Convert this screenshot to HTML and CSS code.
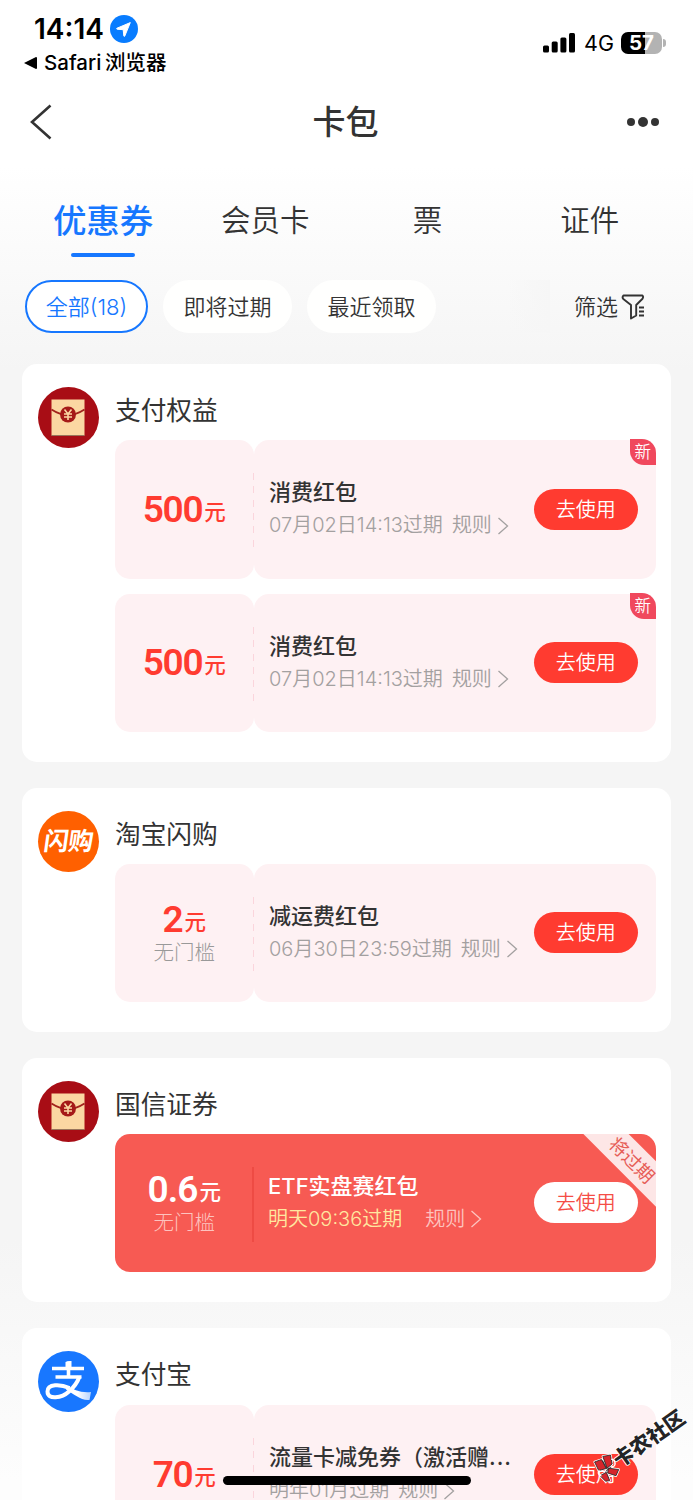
FILE: index.html
```html
<!DOCTYPE html>
<html lang="zh-CN">
<head>
<meta charset="utf-8">
<title>卡包</title>
<link rel="stylesheet" href="styles.css">
</head>
<body>
<svg class="defs" width="0" height="0">
  <defs>
    <linearGradient id="tail" x1="0" y1="0" x2="1" y2="0"><stop offset=".45" stop-color="#fff"/><stop offset="1" stop-color="#b5d3ff"/></linearGradient>
    <symbol id="envelope" viewBox="0 0 61 61">
      <circle cx="30.5" cy="30.5" r="30.5" fill="#a80d15"/>
      <rect x="13.5" y="12.5" width="33" height="36" fill="#fbd7a2"/>
      <path d="M13.5 48.5h33" stroke="#98745a" stroke-width="1"/>
      <path d="M13.5 22.5Q22 28 30 28T46.500 22.500" fill="none" stroke="#a2231c" stroke-width="1.800"/>
      <circle cx="30" cy="27.500" r="8" fill="#a51a18"/>
      <path d="M26.500 22.500l3.500 4.500 3.500-4.500M26 27h8M26 30h8M30 27v6" fill="none" stroke="#fbd7a2" stroke-width="1.600"/>
    </symbol>
    <symbol id="chev" viewBox="0 0 12 18"><path d="M1.500 1L10.500 9 1.500 17" fill="none" stroke="currentColor" stroke-width="1.300"/></symbol>
  </defs>
</svg>
<div class="page">
  <header class="status">
    <div class="status-left">
      <div class="clock"><span class="time">14:14</span>
        <svg class="loc" viewBox="0 0 28 28"><circle cx="14" cy="14" r="14" fill="#087cff"/><path d="M20.300 7.600L7 13.200q-1 .6.1 1l6.100.500.600 6.200q.400 1.100 1 .100Z" fill="#fff" stroke="#fff" stroke-width="1" stroke-linejoin="round"/></svg>
      </div>
      <div class="return"><svg class="tri" viewBox="0 0 13 12"><path d="M0 6L12 0q1 0 1 1v10q0 1-1 1z"/></svg><span class="safari">Safari</span><span>浏览器</span></div>
    </div>
    <div class="status-right">
      <svg class="signal" viewBox="0 0 32 20"><rect y="12.500" width="6" height="7" rx="1.500"/><rect x="8.700" y="8.500" width="6" height="11" rx="1.500"/><rect x="17.400" y="4.500" width="6" height="15" rx="1.500"/><rect x="26" y="0" width="6" height="19.500" rx="1.500"/></svg>
      <span class="net">4G</span>
      <span class="battery">57</span><i class="nub"></i>
    </div>
  </header>
  <nav class="navbar">
    <svg class="back" viewBox="0 0 22 36"><path d="M20.500 1.500L2 18 20.500 34.500" fill="none" stroke="#333" stroke-width="2.600"/></svg>
    <h1>卡包</h1>
    <svg class="more" viewBox="0 0 32 10"><circle cx="4" cy="5" r="4"/><circle cx="16" cy="5" r="5"/><circle cx="28" cy="5" r="4"/></svg>
  </nav>
  <div class="tabs"><span class="tab active">优惠券</span><span class="tab">会员卡</span><span class="tab">票</span><span class="tab">证件</span></div>
  <div class="filters">
    <span class="chip on">全部(18)</span><span class="chip">即将过期</span><span class="chip">最近领取</span>
    <i class="fade"></i>
    <span class="sift">筛选<svg viewBox="0 0 24 26"><path d="M2.500 1.500h19q1.200 1.500 0 3.300L15.200 11v10.500L10 24.500V11L2.300 5Q.800 3 2.500 1.500ZM18 13.500h5M18 17.500h5M18 21.500h5" fill="none" stroke="#333" stroke-width="1.900" stroke-linejoin="round"/></svg></span>
  </div>

  <section class="card">
    <svg class="logo"><use href="#envelope"/></svg>
    <div class="content">
      <h2>支付权益</h2>
      <div class="coupon">
        <div class="amount"><div class="price"><b>500</b>元</div></div>
        <div class="detail"><div class="info"><div class="name">消费红包</div><div class="meta">07月02日14:13过期<span class="rule">规则</span><svg class="chev"><use href="#chev"/></svg></div></div><span class="use">去使用</span></div>
        <span class="new">新</span>
      </div>
      <div class="coupon">
        <div class="amount"><div class="price"><b>500</b>元</div></div>
        <div class="detail"><div class="info"><div class="name">消费红包</div><div class="meta">07月02日14:13过期<span class="rule">规则</span><svg class="chev"><use href="#chev"/></svg></div></div><span class="use">去使用</span></div>
        <span class="new">新</span>
      </div>
    </div>
  </section>

  <section class="card">
    <div class="logo flash"><span>闪购</span></div>
    <div class="content">
      <h2>淘宝闪购</h2>
      <div class="coupon">
        <div class="amount"><div class="price"><b>2</b>元</div><div class="limit">无门槛</div></div>
        <div class="detail"><div class="info"><div class="name">减运费红包</div><div class="meta">06月30日23:59过期<span class="rule">规则</span><svg class="chev"><use href="#chev"/></svg></div></div><span class="use">去使用</span></div>
      </div>
    </div>
  </section>

  <section class="card">
    <svg class="logo"><use href="#envelope"/></svg>
    <div class="content">
      <h2>国信证券</h2>
      <div class="coupon urgent">
        <div class="amount"><div class="price"><b class="decimal">0.6</b>元</div><div class="limit">无门槛</div></div>
        <div class="detail"><div class="info"><div class="name">ETF实盘赛红包</div><div class="meta"><span class="due">明天09:36过期</span><span class="rule">规则</span><svg class="chev"><use href="#chev"/></svg></div></div><span class="use">去使用</span></div>
        <span class="ribbon">将过期</span>
      </div>
    </div>
  </section>

  <section class="card last">
    <svg class="logo" viewBox="0 0 61 61"><circle cx="30.500" cy="30.500" r="30.500" fill="#1877ff"/>
      <path d="M14 17.500h32M17.500 26h26M30.500 10.500v15" fill="none" stroke="#fff" stroke-width="3.600"/>
      <path d="M27.500 11q3-1.200 6-1v7h-6z" fill="#fff"/>
      <path d="M41.500 25.500Q38.500 34 31 40.500C24 47 9.500 49.500 9.500 40.500c0-8 13-7.500 22-3.500" fill="none" stroke="#fff" stroke-width="4"/>
      <path d="M28 34.500C36 38.500 42 42 53 41l-1.500 8C43 50 36 43 28 38.500Z" fill="url(#tail)"/></svg>
    <div class="content">
      <h2>支付宝</h2>
      <div class="coupon">
        <div class="amount"><div class="price"><b>70</b>元</div></div>
        <div class="detail"><div class="info"><div class="name">流量卡减免券（激活赠<span class="dots">...</span></div><div class="meta">明年01月过期<span class="rule">规则</span><svg class="chev"><use href="#chev"/></svg></div></div><span class="use">去使用</span></div>
      </div>
    </div>
  </section>
  <i class="home"></i>
  <div class="mark"><svg viewBox="0 0 78 84">
    <path d="M4 24l20-7 14 26-22 6zM28 8l22-4 5 26-15 12zM44 42l30 4-8 18-24-8zM20 64l18-10 10 24-12 2z" fill="none" stroke="#fff" stroke-width="7" stroke-linejoin="round"/>
    <path d="M4 24l20-7 14 26-22 6zM28 8l22-4 5 26-15 12zM44 42l30 4-8 18-24-8zM20 64l18-10 10 24-12 2z" fill="#d5252b" stroke="#252528" stroke-width="2.500" stroke-linejoin="round"/>
    <path d="M52 16a12 12 0 0 1 6 22M18 48a9 9 0 0 0 6 16" fill="none" stroke="#fff" stroke-width="4"/>
    <path d="M27 20l14 26M36 52l16-14" stroke="#252528" stroke-width="2.500"/>
  </svg><span>卡农社区</span></div>
</div>
</body>
</html>
```
FILE: styles.css
```css
* { box-sizing: border-box; }
body { margin: 0; font-family: Inter, "Noto Sans CJK SC", sans-serif; color: #333; }
svg { display: block; flex: none; }
h1, h2 { margin: 0; }
i { display: block; }
.defs { position: absolute; }
.page { position: relative; width: 693px; height: 1500px; overflow: hidden; background: linear-gradient(#fff 0, #fff 165px, #f5f5f5 370px, #f5f5f5 1240px, #fdfdfd 1480px); }

.status { height: 86px; display: flex; justify-content: space-between; padding: 12px 27px 0 24px; color: #000; }
.clock { display: flex; align-items: center; height: 33px; padding-left: 10px; }
.time { width: 76px; font-size: 28px; font-weight: 600; white-space: nowrap; }
.loc { width: 28px; height: 28px; }
.return { display: flex; align-items: center; height: 36px; font-size: 20.500px; line-height: 28px; font-weight: 500; }
.tri { width: 13px; height: 12px; margin-right: 7px; }
.safari { width: 61px; }
.status-right { display: flex; align-items: center; height: 61px; }
.signal { width: 32px; height: 20px; margin-right: 9px; }
.net { width: 37px; font-size: 21.500px; font-weight: 400; }
.battery { width: 41px; height: 22px; border-radius: 7px; background: linear-gradient(90deg, #000 58%, #b3b3b3 58%); color: #fff; font-size: 20.500px; line-height: 22px; font-weight: 700; text-align: center; }
.nub { width: 3px; height: 8px; margin-left: 1px; border-radius: 0 4px 4px 0; background: #b3b3b3; }

.navbar { height: 72px; padding: 0 34px 0 30px; display: flex; align-items: center; justify-content: space-between; }
.back { width: 22px; height: 36px; }
.navbar h1 { font-size: 33px; line-height: 48px; font-weight: 500; margin-left: 12px; }
.more { width: 32px; height: 10px; fill: #333; }

.tabs { height: 122px; padding: 37px 22px 0; display: grid; grid-template-columns: repeat(4, 1fr); justify-items: center; align-items: start; }
.tab { font-size: 29.500px; line-height: 50px; height: 62px; font-weight: 350; }
.tab.active { color: #1677ff; font-size: 33.500px; font-weight: 500; padding-top: 1px; }
.tab.active::after { content: ""; display: block; width: 64px; height: 4px; border-radius: 2px; margin: 7px auto 0; background: #1677ff; }
.filters { height: 84px; padding: 0 0 0 25px; display: flex; align-items: flex-start; gap: 15px; }
.chip { height: 53px; width: 129px; border-radius: 27px; background: #fffffe; font-size: 22px; line-height: 54px; text-align: center; font-weight: 350; }
.chip.on { width: 123px; border: 2px solid #1677ff; line-height: 51px; color: #1677ff; background: #fff; }
.fade { width: 43px; height: 53px; margin-left: 56px; background: linear-gradient(90deg, transparent, #f6f6f6); }
.sift { display: flex; align-items: center; height: 53px; margin-left: 9px; font-size: 22px; line-height: 50px; font-weight: 350; gap: 3px; }
.sift svg { width: 24px; height: 26px; }

.card { margin: 0 22px 26px; padding: 0 15px 30px 16px; border-radius: 15px; background: #fff; display: flex; }
.logo { width: 61px; height: 61px; margin-top: 23px; flex: none; }
.flash { border-radius: 50%; background: #ff6000; color: #fff; display: flex; align-items: center; justify-content: center; }
.flash span { font-size: 25px; line-height: 30px; font-weight: 700; transform: skewX(-8deg); letter-spacing: -.5px; }
.content { width: 541px; margin-left: 16px; }
h2 { height: 76px; padding-top: 28px; font-size: 25.700px; line-height: 38px; font-weight: 400; }
.coupon { position: relative; display: flex; height: 138.500px; margin-bottom: 15px; }
.coupon:last-child { margin-bottom: 0; height: 138px; }
.amount { width: 138.500px; border-radius: 15px; background: #fef1f3; display: flex; flex-direction: column; align-items: center; justify-content: center; }
.price { display: flex; align-items: baseline; gap: 2px; color: #ff3b30; font-size: 21.500px; line-height: 34px; font-weight: 450; padding-top: 1px; }
.price b { position: relative; top: 2px; font-family: Roboto, sans-serif; font-size: 37px; font-weight: 600; letter-spacing: -1.300px; }
.price .decimal { letter-spacing: -1px; }
.limit { font-size: 20.500px; line-height: 24px; font-weight: 300; color: #999; padding: 2px 0 1px; }
.detail { position: relative; flex: 1; border-radius: 15px; background: #fef1f3; display: flex; align-items: center; padding: 0 18.500px 0 15.500px; }
.detail::before { content: ""; position: absolute; left: -1px; top: 33px; width: 1px; height: 75px; background: repeating-linear-gradient(#fbd5dc 0 7px, transparent 7px 13.300px); }
.info { white-space: nowrap; }
.name { font-size: 22px; line-height: 33px; font-weight: 450; }
.meta { display: flex; align-items: center; font-size: 20px; line-height: 33px; font-weight: 350; color: #a3a0a0; }
.rule { margin-left: 9px; }
.chev { width: 12px; height: 18px; margin-left: 5px; }
.use { position: absolute; right: 18.500px; width: 103.500px; height: 41px; border-radius: 21px; background: #ff3b30; color: #fff; font-size: 20px; line-height: 42px; font-weight: 350; text-align: center; }
.new { position: absolute; top: -1px; right: 0; width: 26.500px; height: 26px; border-radius: 0 14px 0 14px; background: #f0485d; color: #fff; font-size: 16.500px; line-height: 27px; text-align: center; font-weight: 350; }

.urgent { border-radius: 15px; background: #f75a53; overflow: hidden; color: #fff; }
.urgent .amount, .urgent .detail { background: none; }
.urgent .price { color: #fff; }
.urgent .limit, .urgent .meta { color: #fdc3bf; }
.urgent .detail { padding-left: 14.500px; }
.urgent .detail::before { left: -2px; width: 2px; background: #ee4b44; }
.urgent .use { background: #fff; color: #f54d46; }
.urgent .due { color: #ffe8a0; }
.urgent .rule { margin-left: 23px; }
.ribbon { position: absolute; width: 150px; height: 32px; left: 442px; top: 10px; transform: rotate(45deg); background: #fde6e6; color: #e65d57; font-size: 18.500px; line-height: 33px; text-align: center; }

.last h2 { height: 77px; }
.last .detail, .last .amount { height: 139px; }
.dots { letter-spacing: 1px; }
.home { position: absolute; left: 223px; top: 1476px; width: 248px; height: 9px; border-radius: 5px; background: #000; }
.mark { position: absolute; left: 585.500px; top: 1431px; display: flex; align-items: center; transform: rotate(-35deg); }
.mark svg { width: 27px; height: 29px; margin-right: -3px; transform: rotate(35deg); }
.mark span { font-size: 20.500px; line-height: 28px; font-weight: 900; color: #242426; text-shadow: 1px 0 #fff, -1px 0 #fff, 0 1px #fff, 0 -1px #fff; white-space: nowrap; }
```
